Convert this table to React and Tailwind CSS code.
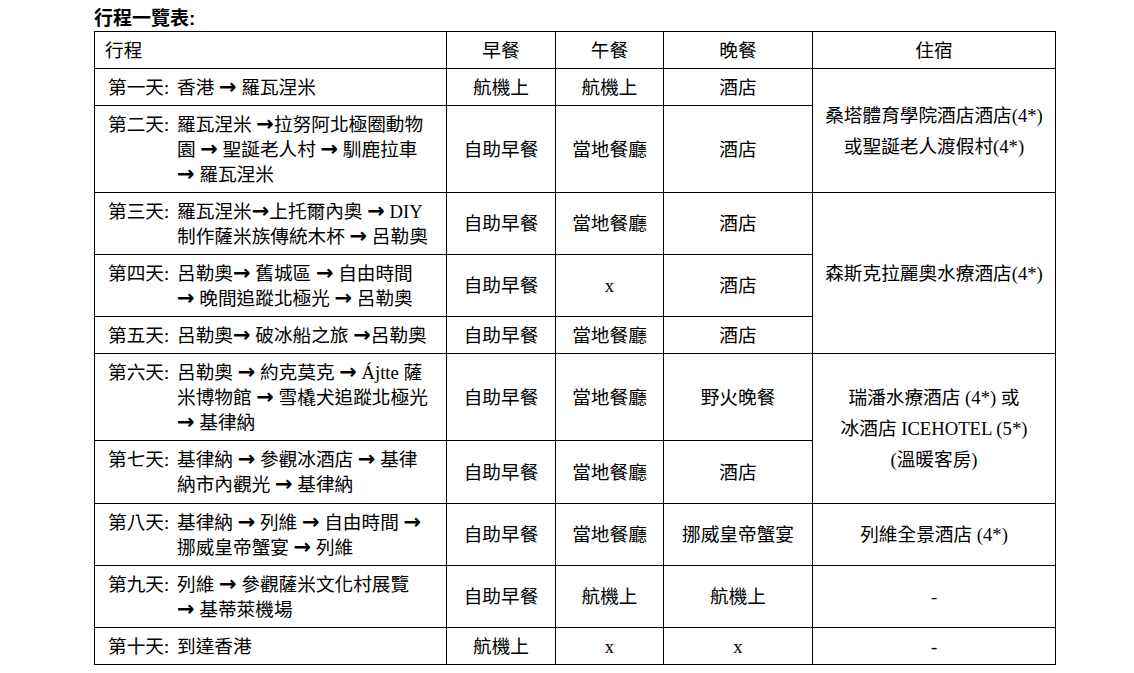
import React from "react";

const rows = [
  {
    day: "第一天:",
    lines: [["香港 ", "→", " 羅瓦涅米"]],
    b: "航機上", l: "航機上", d: "酒店",
    stay: { span: 2, lines: ["桑塔體育學院酒店酒店(4*)", "或聖誕老人渡假村(4*)"] },
  },
  {
    day: "第二天:",
    lines: [["羅瓦涅米 ", "→", "拉努阿北極圈動物"], ["園 ", "→", " 聖誕老人村 ", "→", " 馴鹿拉車"], ["→", " 羅瓦涅米"]],
    b: "自助早餐", l: "當地餐廳", d: "酒店",
  },
  {
    day: "第三天:",
    lines: [["羅瓦涅米", "→", "上托爾內奧 ", "→", " DIY"], ["制作薩米族傳統木杯 ", "→", " 呂勒奧"]],
    b: "自助早餐", l: "當地餐廳", d: "酒店",
    stay: { span: 3, lines: ["森斯克拉麗奧水療酒店(4*)"] },
  },
  {
    day: "第四天:",
    lines: [["呂勒奧", "→", " 舊城區 ", "→", " 自由時間"], ["→", " 晚間追蹤北極光 ", "→", " 呂勒奧"]],
    b: "自助早餐", l: "x", d: "酒店",
  },
  {
    day: "第五天:",
    lines: [["呂勒奧", "→", " 破冰船之旅 ", "→", "呂勒奧"]],
    b: "自助早餐", l: "當地餐廳", d: "酒店",
  },
  {
    day: "第六天:",
    lines: [["呂勒奧 ", "→", " 約克莫克 ", "→", " Ájtte 薩"], ["米博物館 ", "→", " 雪橇犬追蹤北極光"], ["→", " 基律納"]],
    b: "自助早餐", l: "當地餐廳", d: "野火晚餐",
    stay: { span: 2, lines: ["瑞潘水療酒店 (4*) 或", "冰酒店 ICEHOTEL (5*)", "(溫暖客房)"] },
  },
  {
    day: "第七天:",
    lines: [["基律納 ", "→", " 參觀冰酒店 ", "→", " 基律"], ["納市內觀光 ", "→", " 基律納"]],
    b: "自助早餐", l: "當地餐廳", d: "酒店",
  },
  {
    day: "第八天:",
    lines: [["基律納 ", "→", " 列維 ", "→", " 自由時間 ", "→"], ["挪威皇帝蟹宴 ", "→", " 列維"]],
    b: "自助早餐", l: "當地餐廳", d: "挪威皇帝蟹宴",
    stay: { span: 1, lines: ["列維全景酒店 (4*)"] },
  },
  {
    day: "第九天:",
    lines: [["列維 ", "→", " 參觀薩米文化村展覽"], ["→", " 基蒂萊機場"]],
    b: "自助早餐", l: "航機上", d: "航機上",
    stay: { span: 1, lines: ["-"] },
  },
  {
    day: "第十天:",
    lines: [["到達香港"]],
    b: "航機上", l: "x", d: "x",
    stay: { span: 1, lines: ["-"] },
  },
];

const heights = [37, 87, 62, 62, 37, 87, 63, 62, 62, 37];

function Line({ parts }) {
  return (
    <div className="whitespace-pre">
      {parts.map((p, i) =>
        p === "→" ? (
          <span
            key={i}
            className="font-bold leading-[0]"
            style={{ fontFamily: '"DejaVu Sans", sans-serif', fontSize: "21px" }}
          >
            →
          </span>
        ) : (
          <span key={i}>{p}</span>
        )
      )}
    </div>
  );
}

const cell = "border border-black align-middle text-center px-[4px]";

export default function App() {
  return (
    <div
      className="bg-white w-[1134px] h-[673px] text-black pl-[94px] pt-[6px]"
      style={{ fontFamily: '"Liberation Serif", "Noto Sans CJK TC", serif', fontSize: "18.67px" }}
    >
      <div
        className="leading-[25px] font-bold"
        style={{ fontFamily: '"Liberation Sans", "Noto Sans CJK TC", sans-serif', fontSize: "19px" }}
      >
        行程一覽表:
      </div>
      <table className="border-collapse table-fixed w-[961px] leading-[25px]">
        <colgroup>
          <col className="w-[352px]" />
          <col className="w-[109px]" />
          <col className="w-[108px]" />
          <col className="w-[149px]" />
          <col className="w-[243px]" />
        </colgroup>
        <tbody>
          <tr className="h-[37px]">
            <td className="border border-black align-middle text-left pl-[10px]">行程</td>
            <td className={cell}>早餐</td>
            <td className={cell}>午餐</td>
            <td className={cell}>晚餐</td>
            <td className={cell}>住宿</td>
          </tr>
          {rows.map((r, i) => (
            <tr key={i} style={{ height: heights[i] + "px" }}>
              <td className="border border-black align-middle text-left pl-[13px] py-0">
                <div className="flex">
                  <div className="w-[69px] shrink-0 whitespace-nowrap">{r.day}</div>
                  <div>
                    {r.lines.map((l, j) => (
                      <Line key={j} parts={l} />
                    ))}
                  </div>
                </div>
              </td>
              <td className={cell}>{r.b}</td>
              <td className={cell}>{r.l}</td>
              <td className={cell}>{r.d}</td>
              {r.stay && (
                <td className={cell} rowSpan={r.stay.span}>
                  {r.stay.lines.map((s, k) => (
                    <div key={k} className={r.stay.lines.length > 1 ? "leading-[31px]" : ""}>
                      {s}
                    </div>
                  ))}
                </td>
              )}
            </tr>
          ))}
        </tbody>
      </table>
    </div>
  );
}
